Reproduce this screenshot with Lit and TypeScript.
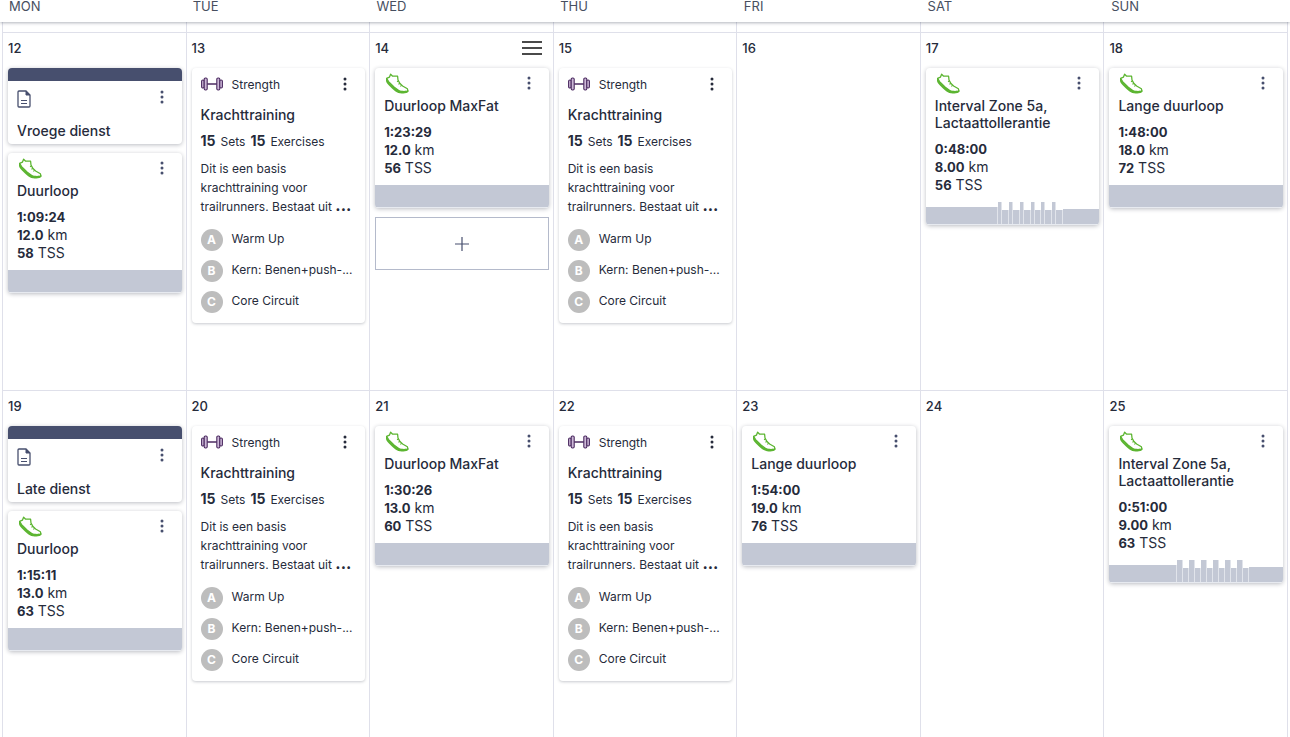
import { LitElement, html, svg, css, nothing } from "lit";
import { customElement, property } from "lit/decorators.js";

type Segment = { span: number; height: number };
type Note = { kind: "note"; title: string };
type Run = { kind: "run"; title: string; time: string; distance: string; tss: string; profile: Segment[] };
type Strength = { kind: "strength" };
type Entry = Note | Run | Strength;
type Day = { date: number; entries: Entry[]; active?: boolean };

const steady: Segment[] = [{ span: 1, height: 22 }];

const intervals = (warmUp: number, hard: number, easy: number, coolDown: number): Segment[] => [
  { span: warmUp, height: 17 },
  ...Array.from({ length: 6 }, () => [
    { span: hard, height: 22 },
    { span: easy, height: 14 },
  ]).flat(),
  { span: coolDown, height: 15 },
];

const run = (title: string, time: string, distance: string, tss: string, profile = steady): Run => ({
  kind: "run", title, time, distance, tss, profile,
});

const weeks: Day[][] = [
  [
    { date: 12, entries: [{ kind: "note", title: "Vroege dienst" }, run("Duurloop", "1:09:24", "12.0", "58")] },
    { date: 13, entries: [{ kind: "strength" }] },
    { date: 14, active: true, entries: [run("Duurloop MaxFat", "1:23:29", "12.0", "56")] },
    { date: 15, entries: [{ kind: "strength" }] },
    { date: 16, entries: [] },
    { date: 17, entries: [run("Interval Zone 5a, Lactaattollerantie", "0:48:00", "8.00", "56", intervals(72, 4, 7, 36))] },
    { date: 18, entries: [run("Lange duurloop", "1:48:00", "18.0", "72")] },
  ],
  [
    { date: 19, entries: [{ kind: "note", title: "Late dienst" }, run("Duurloop", "1:15:11", "13.0", "63")] },
    { date: 20, entries: [{ kind: "strength" }] },
    { date: 21, entries: [run("Duurloop MaxFat", "1:30:26", "13.0", "60")] },
    { date: 22, entries: [{ kind: "strength" }] },
    { date: 23, entries: [run("Lange duurloop", "1:54:00", "19.0", "76")] },
    { date: 24, entries: [] },
    { date: 25, entries: [run("Interval Zone 5a, Lactaattollerantie", "0:51:00", "9.00", "63", intervals(68, 6, 6, 34))] },
  ],
];

const shoeIcon = html`<svg class="shoe" viewBox="0 0 24 22" aria-hidden="true">
  <path d="M1.600 5.400 4.400 4.200 5.600 1.200 7.400 3 12.600 3.200 13 7 15 10.600 17.600 13 22.400 15.800 23 18.200 20.600 19.400 15 18.600 9 14 3.600 8.600Z" fill="#fff" stroke="#5cb531" stroke-width="1.300" stroke-linejoin="round"/>
  <path d="M1.600 5C2.400 8.200 5 10.600 8 13.200 11 16 13.600 17.600 17 17.800 19 18 21.400 18 23.200 17L23.200 18.800C22 20.600 18.600 20.800 15 20.200 10.600 19.400 7.600 16 5 13.400 2.400 11 -.4 8.200 1.600 5Z" fill="#5cb531"/>
  <path d="M13.400 8 12 8.700M14.800 10.400 13.400 11.200M16.600 12.400 15.300 13.400" stroke="#5cb531" stroke-width="1.100" fill="none"/>
</svg>`;

const dumbbellIcon = html`<svg class="dumbbell" viewBox="0 0 22 14" aria-hidden="true">
  <g fill="#cdb9d8" stroke="#4b2a60" stroke-width="1.100">
    <rect x=".6" y="3" width="2.600" height="8" rx="1.200"/>
    <rect x="3.200" y="1" width="3" height="12" rx="1.200"/>
    <rect x="15.800" y="1" width="3" height="12" rx="1.200"/>
    <rect x="18.800" y="3" width="2.600" height="8" rx="1.200"/>
  </g>
  <path d="M6.200 7H15.800" stroke="#4b2a60" stroke-width="1.400"/>
</svg>`;

const noteIcon = html`<svg class="note-icon" viewBox="0 0 14 18" aria-hidden="true">
  <path d="M2 1H9L13 5V16Q13 17 12 17H2Q1 17 1 16V2Q1 1 2 1Z" fill="none" stroke="#474f6e" stroke-width="1.300"/>
  <path d="M9 1V5H13Z" fill="#474f6e" stroke="#474f6e"/>
  <path d="M4 10.500H10M4 13.500H10" stroke="#474f6e" stroke-width="1.100"/>
</svg>`;

const dotsIcon = html`<svg class="dots" viewBox="0 0 4 14" aria-hidden="true">
  ${[2, 7, 12].map((y) => svg`<circle cx="2" cy=${y} r="1.500" fill="currentColor"/>`)}
</svg>`;

@customElement("training-card")
class TrainingCard extends LitElement {
  @property({ attribute: false }) entry!: Entry;

  static styles = css`
    :host { display: block; }
    * { box-sizing: border-box; margin: 0; }
    .card {
      background: #fff;
      border-radius: 4px;
      box-shadow: 0 1px 4px rgba(40, 46, 66, 0.32);
      overflow: hidden;
      color: #262b3b;
    }
    .strength { box-shadow: 0 1px 3px rgba(40, 46, 66, 0.26); }
    .top { display: flex; justify-content: space-between; align-items: flex-start; }
    .menu {
      display: flex; justify-content: center; width: 20px; height: 20px; padding: 3px 0;
      border: 0; background: none; color: #474f6e; cursor: pointer;
    }
    .strength .menu { color: #262b3b; }
    .dots { width: 4px; height: 14px; }
    h3 { font-size: 14px; line-height: 17px; font-weight: 500; }
    .stripe { height: 13px; background: #474f6e; }
    .note { padding: 6px 10px 5px 9px; }
    .note .top { height: 35px; }
    .note-icon { width: 14px; height: 18px; margin-top: 3px; }
    .run { padding: 5px 10px 8px 9px; }
    .run .top { height: 24px; }
    .shoe { width: 24px; height: 22px; margin-left: 1px; }
    .stats { list-style: none; padding: 0; margin-top: 9px; font-size: 14px; line-height: 18px; }
    b { font-weight: 700; }
    .stats b { font-size: 13px; }
    .profile { display: flex; align-items: flex-end; height: 23px; border-bottom: 1px solid #e7eaf0; }
    .segment { background: #c3c8d5; border-right: 1px solid #e1e4eb; }
    .segment:last-child { border-right: 0; }
    .body { padding: 6px 10px 10px 9px; font-size: 12px; }
    .kind { display: flex; align-items: center; gap: 9px; height: 20px; }
    .dumbbell { width: 22px; height: 14px; }
    .body h3 { margin-top: 11px; line-height: 20px; }
    .sets { display: flex; align-items: baseline; gap: 5px; margin-top: 6px; line-height: 20px; }
    .sets b { font-size: 14px; }
    .text { margin-top: 7px; line-height: 19px; }
    .text b { font-size: 16px; line-height: 16px; }
    .blocks { list-style: none; padding: 0; margin-top: 13px; display: grid; gap: 9px; }
    .blocks li { display: flex; align-items: flex-start; gap: 9px; line-height: 20px; }
    .badge {
      flex: none; width: 22px; height: 22px; border-radius: 50%; background: #bdbdbd; color: #fff;
      font-size: 12px; font-weight: 700; line-height: 22px; text-align: center;
    }
    .name { white-space: nowrap; }
  `;

  private menu() {
    return html`<button class="menu" aria-label="More options">${dotsIcon}</button>`;
  }

  private profile(segments: Segment[]) {
    const total = segments.reduce((sum, s) => sum + s.span, 0);
    return html`<div class="profile">
      ${segments.map((s) => html`<div class="segment" style="width: ${(s.span / total) * 100}%; height: ${s.height}px"></div>`)}
    </div>`;
  }

  render() {
    const e = this.entry;
    if (e.kind === "note") {
      return html`<article class="card">
        <div class="stripe"></div>
        <div class="note"><div class="top">${noteIcon}${this.menu()}</div><h3>${e.title}</h3></div>
      </article>`;
    }
    if (e.kind === "run") {
      return html`<article class="card">
        <div class="run">
          <div class="top">${shoeIcon}${this.menu()}</div>
          <h3>${e.title}</h3>
          <ul class="stats">
            <li><b>${e.time}</b></li>
            <li><b>${e.distance}</b> km</li>
            <li><b>${e.tss}</b> TSS</li>
          </ul>
        </div>
        ${this.profile(e.profile)}
      </article>`;
    }
    return html`<article class="card strength">
      <div class="body">
        <div class="top"><div class="kind">${dumbbellIcon}<span>Strength</span></div>${this.menu()}</div>
        <h3>Krachttraining</h3>
        <p class="sets"><b>15</b> <span>Sets</span> <b>15</b> <span>Exercises</span></p>
        <p class="text">Dit is een basis krachttraining voor trailrunners. Bestaat uit <b>...</b></p>
        <ul class="blocks">
          ${[["A", "Warm Up"], ["B", "Kern: Benen+push-..."], ["C", "Core Circuit"]].map(
            ([letter, name]) => html`<li><span class="badge">${letter}</span><span class="name">${name}</span></li>`,
          )}
        </ul>
      </div>
    </article>`;
  }
}

@customElement("app-root")
class AppRoot extends LitElement {
  static styles = css`
    :host {
      display: block; height: 100vh; overflow: hidden; background: #fff;
      font-family: Inter, "Liberation Sans", sans-serif; color: #262b3b;
    }
    * { box-sizing: border-box; margin: 0; }
    .weekdays {
      display: grid; grid-template-columns: repeat(7, minmax(0, 1fr));
      height: 22px; padding: 0 2px; box-shadow: 0 1px 3px rgba(40, 46, 66, 0.36);
      position: relative; background: #fff;
      font-size: 13px; line-height: 13px; color: #474f5f;
    }
    .weekdays span { padding-left: 7px; }
    .calendar { margin: 0 2px; border-left: 1px solid #dfe0ea; }
    .spacer, .week { display: grid; grid-template-columns: repeat(7, minmax(0, 1fr)); }
    .spacer { height: 10px; }
    .spacer div, .day { border-right: 1px solid #dfe0ea; }
    .week { min-height: 358px; border-top: 1px solid #dfe0ea; }
    .day { padding: 5px 4px 5px 5px; }
    .head { display: flex; justify-content: space-between; align-items: center; height: 20px; margin-bottom: 10px; }
    .date { font-size: 13px; font-weight: 500; }
    .handle { width: 34px; height: 20px; border: 0; padding: 0; background: none; }
    .handle svg { display: block; margin: 0 auto; width: 20px; height: 14px; }
    .entries { display: grid; grid-template-columns: minmax(0, 1fr); gap: 9px; }
    .add { display: flex; align-items: center; justify-content: center; height: 53px; border: 1px solid #b4bacb; background: #fff; cursor: pointer; }
    .add svg { width: 14px; height: 14px; }
  `;

  render() {
    return html`
      <header class="weekdays">
        ${["MON", "TUE", "WED", "THU", "FRI", "SAT", "SUN"].map((d) => html`<span>${d}</span>`)}
      </header>
      <main class="calendar">
        <div class="spacer">${weeks[0].map(() => html`<div></div>`)}</div>
        ${weeks.map((week) => html`<section class="week">
          ${week.map((day) => html`<div class="day">
            <div class="head">
              <span class="date">${day.date}</span>
              ${day.active
                ? html`<button class="handle" aria-label="Day menu"><svg viewBox="0 0 20 14"><path d="M0 1H20M0 7H20M0 13H20" stroke="#4a4a4a" stroke-width="2"/></svg></button>`
                : nothing}
            </div>
            <div class="entries">
              ${day.entries.map((entry) => html`<training-card .entry=${entry}></training-card>`)}
              ${day.active
                ? html`<button class="add" aria-label="Add workout"><svg viewBox="0 0 14 14"><path d="M7 0V14M0 7H14" stroke="#474f6e" stroke-width="1.200"/></svg></button>`
                : nothing}
            </div>
          </div>`)}
        </section>`)}
      </main>`;
  }
}
